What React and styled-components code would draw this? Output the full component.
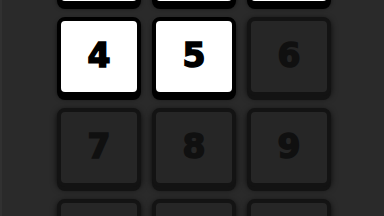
import React from "react";
import styled, { createGlobalStyle } from "styled-components";

const Global = createGlobalStyle`
  html, body {
    margin: 0;
    padding: 0;
    background: #2a2a2a;
    overflow: hidden;
  }
  body {
    border-left: 2px solid #313131;
    height: 216px;
    box-sizing: border-box;
  }
`;

const Pad = styled.div`
  display: grid;
  grid-template-columns: repeat(3, 84px);
  grid-auto-rows: 83px;
  column-gap: 11px;
  row-gap: 8px;
  justify-content: center;
  margin-top: -74px;
  padding-left: 2px;
`;

const Key = styled.div`
  box-sizing: border-box;
  display: flex;
  align-items: center;
  justify-content: center;
  height: 79px;
  border: 4px solid ${(p) => (p.$on ? "#000" : "#131313")};
  border-radius: 8px;
  background: ${(p) => (p.$on ? "#ffffff" : "#262626")};
  color: ${(p) => (p.$on ? "#000" : "#101010")};
  -webkit-text-stroke: 1.6px currentColor;
  box-shadow: ${(p) =>
    p.$on
      ? "0 4px 0 #000, 0 3px 4px rgba(0,0,0,0.6)"
      : "0 4px 0 #131313, 0 2px 6px rgba(0,0,0,0.8)"};
  font-family: "DejaVu Sans", "Liberation Sans", sans-serif;
  font-weight: 900;
  font-size: 33px;
  line-height: 1;
  padding-bottom: 2px;
  user-select: none;
`;

const keys = [
  { label: "1", on: true },
  { label: "2", on: true },
  { label: "3", on: true },
  { label: "4", on: true },
  { label: "5", on: true },
  { label: "6", on: false },
  { label: "7", on: false },
  { label: "8", on: false },
  { label: "9", on: false },
  { label: "*", on: false },
  { label: "0", on: false },
  { label: "#", on: false },
];

export default function App() {
  return (
    <>
      <Global />
      <Pad>
        {keys.map((k) => (
          <Key key={k.label} $on={k.on}>
            {k.label}
          </Key>
        ))}
      </Pad>
    </>
  );
}
